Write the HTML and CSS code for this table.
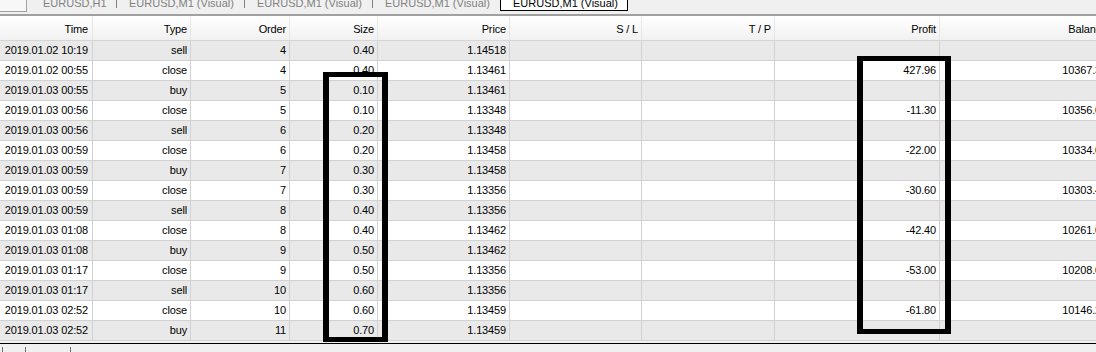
FILE: index.html
```html
<!DOCTYPE html>
<html>
<head>
<meta charset="utf-8">
<link rel="stylesheet" href="styles.css">
</head>
<body>
<div class="page">
  <div class="tabs">
    <div class="tab-stub"></div>
    <div class="tab tab-first">EURUSD,H1</div>
    <div class="tab">EURUSD,M1 (Visual)</div>
    <div class="tab">EURUSD,M1 (Visual)</div>
    <div class="tab tab-last">EURUSD,M1 (Visual)</div>
    <div class="tab-active">EURUSD,M1 (Visual)</div>
  </div>
  <div class="table">
    <div class="row head">
      <div class="c c-time">Time</div><div class="c">Type</div><div class="c">Order</div><div class="c">Size</div><div class="c">Price</div><div class="c">S / L</div><div class="c">T / P</div><div class="c">Profit</div><div class="c">Balance</div>
    </div>
    <div class="row alt"><div class="c c-time">2019.01.02 10:19</div><div class="c">sell</div><div class="c">4</div><div class="c">0.40</div><div class="c">1.14518</div><div class="c"></div><div class="c"></div><div class="c"></div><div class="c"></div></div>
    <div class="row"><div class="c c-time">2019.01.02 00:55</div><div class="c">close</div><div class="c">4</div><div class="c">0.40</div><div class="c">1.13461</div><div class="c"></div><div class="c"></div><div class="c">427.96</div><div class="c">10367.36</div></div>
    <div class="row alt"><div class="c c-time">2019.01.03 00:55</div><div class="c">buy</div><div class="c">5</div><div class="c">0.10</div><div class="c">1.13461</div><div class="c"></div><div class="c"></div><div class="c"></div><div class="c"></div></div>
    <div class="row"><div class="c c-time">2019.01.03 00:56</div><div class="c">close</div><div class="c">5</div><div class="c">0.10</div><div class="c">1.13348</div><div class="c"></div><div class="c"></div><div class="c">-11.30</div><div class="c">10356.06</div></div>
    <div class="row alt"><div class="c c-time">2019.01.03 00:56</div><div class="c">sell</div><div class="c">6</div><div class="c">0.20</div><div class="c">1.13348</div><div class="c"></div><div class="c"></div><div class="c"></div><div class="c"></div></div>
    <div class="row"><div class="c c-time">2019.01.03 00:59</div><div class="c">close</div><div class="c">6</div><div class="c">0.20</div><div class="c">1.13458</div><div class="c"></div><div class="c"></div><div class="c">-22.00</div><div class="c">10334.06</div></div>
    <div class="row alt"><div class="c c-time">2019.01.03 00:59</div><div class="c">buy</div><div class="c">7</div><div class="c">0.30</div><div class="c">1.13458</div><div class="c"></div><div class="c"></div><div class="c"></div><div class="c"></div></div>
    <div class="row"><div class="c c-time">2019.01.03 00:59</div><div class="c">close</div><div class="c">7</div><div class="c">0.30</div><div class="c">1.13356</div><div class="c"></div><div class="c"></div><div class="c">-30.60</div><div class="c">10303.46</div></div>
    <div class="row alt"><div class="c c-time">2019.01.03 00:59</div><div class="c">sell</div><div class="c">8</div><div class="c">0.40</div><div class="c">1.13356</div><div class="c"></div><div class="c"></div><div class="c"></div><div class="c"></div></div>
    <div class="row"><div class="c c-time">2019.01.03 01:08</div><div class="c">close</div><div class="c">8</div><div class="c">0.40</div><div class="c">1.13462</div><div class="c"></div><div class="c"></div><div class="c">-42.40</div><div class="c">10261.06</div></div>
    <div class="row alt"><div class="c c-time">2019.01.03 01:08</div><div class="c">buy</div><div class="c">9</div><div class="c">0.50</div><div class="c">1.13462</div><div class="c"></div><div class="c"></div><div class="c"></div><div class="c"></div></div>
    <div class="row"><div class="c c-time">2019.01.03 01:17</div><div class="c">close</div><div class="c">9</div><div class="c">0.50</div><div class="c">1.13356</div><div class="c"></div><div class="c"></div><div class="c">-53.00</div><div class="c">10208.06</div></div>
    <div class="row alt"><div class="c c-time">2019.01.03 01:17</div><div class="c">sell</div><div class="c">10</div><div class="c">0.60</div><div class="c">1.13356</div><div class="c"></div><div class="c"></div><div class="c"></div><div class="c"></div></div>
    <div class="row"><div class="c c-time">2019.01.03 02:52</div><div class="c">close</div><div class="c">10</div><div class="c">0.60</div><div class="c">1.13459</div><div class="c"></div><div class="c"></div><div class="c">-61.80</div><div class="c">10146.26</div></div>
    <div class="row alt"><div class="c c-time">2019.01.03 02:52</div><div class="c">buy</div><div class="c">11</div><div class="c">0.70</div><div class="c">1.13459</div><div class="c"></div><div class="c"></div><div class="c"></div><div class="c"></div></div>
  </div>
  <div class="footer">
    <span class="tick t1"></span><span class="tick t2"></span><span class="tick t3"></span>
  </div>
  <div class="mark mark-size"></div>
  <div class="mark mark-profit"></div>
</div>
</body>
</html>
```
FILE: styles.css
```css
html, body {
  margin: 0;
  padding: 0;
}
body {
  width: 1096px;
  height: 352px;
  overflow: hidden;
  background: #f0f0f0;
  font-family: "Liberation Sans", Arial, sans-serif;
  font-size: 11px;
  line-height: 13px;
  color: #000;
}
.page {
  position: relative;
  width: 1120px;
}
.tabs {
  display: flex;
  align-items: flex-start;
  margin-top: -3px;
  border-bottom: 2px solid #a0a0a0;
  box-sizing: border-box;
  height: 19px;
}
.tab-stub {
  width: 27px;
  height: 15px;
  box-sizing: border-box;
  background: #f7f7f7;
  border-right: 1px solid #a0a0a0;
  border-bottom: 1px solid #a0a0a0;
}
.tab {
  width: 128px;
  height: 11px;
  padding-left: 12px;
  box-sizing: border-box;
  border-right: 1px solid #808080;
  color: #808080;
  white-space: nowrap;
}
.tab-first {
  width: 90px;
  padding-left: 16px;
}
.tab-last {
  border-right: none;
  width: 127px;
}
.tab-active {
  width: 128px;
  height: 14px;
  padding-left: 12px;
  box-sizing: border-box;
  background: #fff;
  border: 1px solid #000;
  border-top: none;
  white-space: nowrap;
  color: #000;
}
.table {
  border-top: 1px solid #fff;
  width: 1111px;
  letter-spacing: -0.15px;
}
.row {
  display: grid;
  grid-template-columns: 93px 98px 99px 88px 132px 132px 133px 165px 171px;
  height: 20px;
  box-sizing: border-box;
  border-bottom: 1px solid #d2d2d2;
  background: #fff;
}
.row.alt {
  background: #e9e9e9;
}
.row.head {
  height: 24px;
  background: linear-gradient(#ffffff, #f1f1f1);
  border-bottom: 1px solid #d5d5d5;
}
.c {
  border-right: 1px solid #d2d2d2;
  text-align: right;
  padding-right: 3px;
  line-height: 19px;
  white-space: nowrap;
  overflow: hidden;
}
.c-time {
  padding-right: 4px;
}
.head .c {
  line-height: 24px;
  border-right-color: #e6e6e6;
}
.footer {
  position: relative;
  margin-top: 2px;
  border-top: 1px solid #000;
  height: 12px;
  background: #f0f0f0;
}
.tick {
  position: absolute;
  top: 3px;
  width: 1px;
  height: 9px;
  background: #707070;
}
.t1 { left: 2px; }
.t2 { left: 25px; }
.t3 { left: 70px; }
.mark {
  position: absolute;
  box-sizing: border-box;
  border-style: solid;
  border-color: #000;
  border-width: 5px 6px;
}
.mark-size {
  left: 323px;
  top: 75px;
  width: 65px;
  height: 270px;
}
.mark-profit {
  left: 857px;
  top: 59px;
  width: 94px;
  height: 278px;
}
```
